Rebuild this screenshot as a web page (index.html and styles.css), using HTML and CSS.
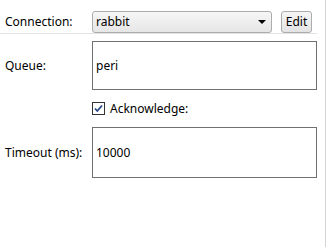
FILE: index.html
```html
<!DOCTYPE html>
<html lang="en">
<head>
    <meta charset="UTF-8">
    <title>Queue Settings</title>
    <link rel="stylesheet" href="styles.css">
</head>
<body>
    <div class="panel">
        <div class="conn-row">
            <span class="label">Connection:</span>
            <div class="combo">
                <span class="combo-value">rabbit</span>
                <svg class="combo-arrow" width="8" height="4" viewBox="0 0 8 4">
                    <path d="M0 0h8L4 4z" fill="#000"/>
                </svg>
            </div>
            <button class="button">Edit</button>
        </div>

        <div class="form">
            <span class="label">Queue:</span>
            <div class="textbox">peri</div>

            <span></span>
            <label class="check">
                <span class="check-box">
                    <svg width="11" height="11" viewBox="0 0 11 11">
                        <path d="M2 5.5l2.3 2.5L9 2.5" fill="none" stroke="#26477e" stroke-width="1.8"/>
                    </svg>
                </span>
                Acknowledge:
            </label>

            <span class="label">Timeout (ms):</span>
            <div class="textbox tall">10000</div>
        </div>
    </div>
</body>
</html>
```

FILE: styles.css
```css
:root {
    --text: #000;
    --border-box: #707070;
    --border-ctl: #acacac;
    --line: #e3e3e3;
    --font: "Noto Sans", "Liberation Sans", sans-serif;
}

body {
    margin: 0;
    background: #fff;
    font-family: var(--font);
    font-size: 12px;
    color: var(--text);
}

.panel {
    width: 325px;
    height: 247px;
    border-right: 1px solid #d4d4d4;
    box-sizing: content-box;
}

.conn-row {
    display: flex;
    align-items: center;
    height: 23px;
    padding: 10px 0 0 5px;
    border-bottom: 1px solid var(--line);
    width: 312px;
}

.label {
    width: 87px;
    flex-shrink: 0;
}

.combo {
    width: 180px;
    height: 22px;
    box-sizing: border-box;
    border: 1px solid var(--border-ctl);
    border-radius: 3px;
    background: linear-gradient(#f6f6f6, #e6e6e6);
    display: flex;
    align-items: center;
    justify-content: space-between;
    padding: 0 5px 0 3px;
}

.combo-arrow {
    display: block;
}

.button {
    margin-left: 9px;
    width: 31px;
    height: 22px;
    padding: 0;
    border: 1px solid var(--border-ctl);
    border-radius: 3px;
    background: linear-gradient(#f6f6f6, #e3e3e3);
    font-family: var(--font);
    font-size: 12px;
    color: var(--text);
}

.form {
    display: grid;
    grid-template-columns: 87px 225px;
    align-items: center;
    row-gap: 0;
    padding: 7px 0 0 5px;
}

.textbox {
    height: 49px;
    box-sizing: border-box;
    border: 1px solid var(--border-box);
    display: flex;
    align-items: center;
    padding-left: 3px;
}

.textbox.tall {
    height: 51px;
}

.check {
    display: flex;
    align-items: center;
    gap: 5px;
    height: 37px;
}

.check-box {
    width: 13px;
    height: 13px;
    box-sizing: border-box;
    border: 1px solid #333;
    display: flex;
    align-items: center;
    justify-content: center;
    background: #fff;
}

.check-box svg {
    display: block;
}
```
